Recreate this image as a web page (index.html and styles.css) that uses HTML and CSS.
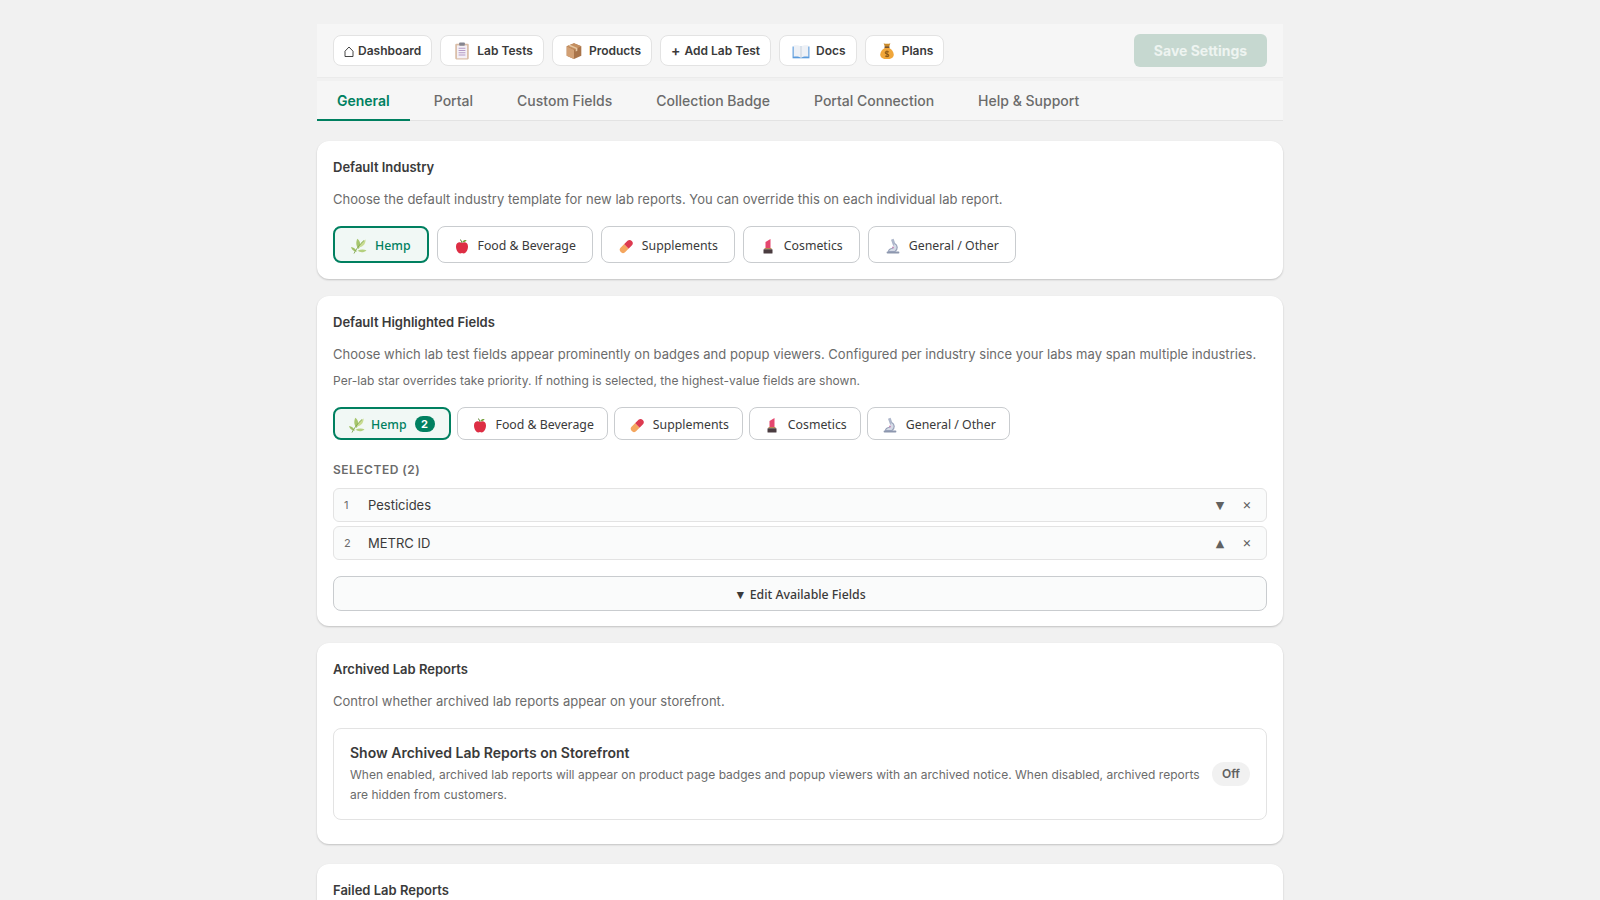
FILE: index.html
```html
<!DOCTYPE html>
<html lang="en">
<head>
    <meta charset="UTF-8">
    <meta name="viewport" content="width=device-width, initial-scale=1.0">
    <title>Settings</title>
    <link rel="stylesheet" href="styles.css">
</head>
<body>
    <!-- Icon sprite -->
    <svg class="sprite" width="0" height="0">
        <symbol id="i-clip" viewBox="0 0 16 16">
            <rect x="2" y="1.5" width="12" height="14" rx="1" fill="#d9bda6"/>
            <rect x="3.5" y="3" width="9" height="11.5" fill="#f4f0f6"/>
            <rect x="5.5" y="0.5" width="5" height="2.8" rx="0.6" fill="#85858f"/>
            <path d="M5 5.5h6M5 7.5h6M5 9.5h6M5 11.5h6" stroke="#b49ac6" stroke-width="0.9"/>
        </symbol>
        <symbol id="i-box" viewBox="0 0 16 16">
            <path d="M8 1 14.5 3.8v8.4L8 15 1.5 12.2V3.8z" fill="#a9744a"/>
            <path d="M8 6.8V15L1.5 12.2V3.8z" fill="#d2a074"/>
            <path d="M8 1 14.5 3.8 8 6.8 1.5 3.8z" fill="#c48f60"/>
            <path d="M4.5 2.5 11 5.4v2.3l-1.5 0.7V6.1L3 3.3z" fill="#e6c8a4"/>
        </symbol>
        <symbol id="i-book" viewBox="0 0 16 16">
            <path d="M0.5 4v10.5h15V4z" fill="#5b9bdc"/>
            <path d="M1.5 3c2.5-0.4 5 0 6.5 1 1.5-1 4-1.4 6.5-1v10c-2.5-0.4-5 0-6.5 1-1.5-1-4-1.4-6.5-1z" fill="#eef1f6"/>
            <path d="M8 4v10" stroke="#b7c2cf" stroke-width="0.6"/>
        </symbol>
        <symbol id="i-bag" viewBox="0 0 16 16">
            <path d="M5 1c1.2 0.7 4.8 0.7 6 0L9.8 4.5H6.2z" fill="#c98a2b"/>
            <path d="M6.2 5h3.6c2.5 1.6 4.2 3.8 4.2 6 0 2.9-2.5 4.2-6 4.2S2 13.9 2 11c0-2.2 1.7-4.4 4.2-6z" fill="#f0a63a"/>
            <rect x="5.8" y="4" width="4.4" height="1.3" fill="#6d4c2f"/>
            <path d="M8 7.5v6M9.6 9c-0.6-0.7-3.2-0.8-3.2 0.6 0 1.5 3.2 0.8 3.2 2.3 0 1.3-2.6 1.2-3.2 0.5" fill="none" stroke="#8a5716" stroke-width="0.9"/>
        </symbol>
        <symbol id="i-herb" viewBox="0 0 16 16">
            <path d="M7.5 11C4.8 8 4.8 4 6.3 0.8 9.8 3.5 10.3 8 7.5 11z" fill="#a6c66e"/>
            <path d="M6 13.5C4.500 10.800 2.500 9.200 0 9c0.900 3 3 4.800 6 4.500z" fill="#9fc066"/>
            <path d="M6.5 12.8c2.800-1.600 5.800-1.800 9-0.600-2.500 2.500-6 2.800-9 0.600z" fill="#b4d07e"/>
            <path d="M8 9.5c0.500-3.200 2.500-6 6.500-8 0.300 4-2 7-6.500 8z" fill="#c8dc92"/>
            <path d="M3 15.5C5 11.5 8 7 13 2.5" fill="none" stroke="#7fa650" stroke-width="0.9"/>
        </symbol>
        <symbol id="i-apple" viewBox="0 0 16 16">
            <path d="M8 5C6 3.6 2 4 2 8.5 2 12.5 4.5 15.5 6.2 15.5c0.8 0 1.2-0.4 1.8-0.4s1 0.4 1.8 0.4c1.7 0 4.2-3 4.2-7C14 4 10 3.6 8 5z" fill="#dd2e44"/>
            <path d="M8 5C7.8 3.5 7.2 2.3 6 1.5" fill="none" stroke="#5c7f32" stroke-width="1"/>
            <path d="M8.2 4C9 2.4 10.5 1.8 12.5 2 12 3.6 10.5 4.5 8.2 4z" fill="#77a33e"/>
        </symbol>
        <symbol id="i-pill" viewBox="0 0 16 16">
            <path d="M9.5 2.8a3.2 3.2 0 0 1 4.5 4.5L10.5 10.8 6 6.3z" fill="#dd3a50"/>
            <path d="M6 6.3l4.5 4.5L7 14.3a3.2 3.2 0 0 1-4.5-4.500z" fill="#f4a65e"/>
        </symbol>
        <symbol id="i-lip" viewBox="0 0 16 16">
            <path d="M5.5 10V4L10.5 1v9z" fill="#e5476f"/>
            <rect x="4.5" y="10" width="7" height="1.2" fill="#b98a50"/>
            <rect x="3.5" y="11.2" width="9" height="4.3" rx="0.5" fill="#4a3c40"/>
        </symbol>
        <symbol id="i-scope" viewBox="0 0 16 16">
            <path d="M2.5 14.5h11" stroke="#8d97ae" stroke-width="1.8" stroke-linecap="round"/>
            <path d="M6 1.8l2.6-1 2.2 6.2-2.6 1z" fill="#aeb7cb"/>
            <path d="M9.5 5.5c3.5 1.5 3.5 6 0.5 8H3.5c0-2 2-3 4.5-3.5" fill="#d5dae6" stroke="#98a2ba" stroke-width="1.2"/>
            <circle cx="8" cy="9.6" r="1" fill="#c48bb8"/>
        </symbol>
    </svg>

    <div class="page">
        <!-- Top navigation -->
        <div class="nav-bar">
            <div class="nav-links">
                <a class="nav-btn"><svg class="home-icon" viewBox="0 0 10 11"><path d="M1 10.5V5.2L5 1l4 4.2v5.3z" fill="none" stroke="#303030" stroke-width="0.9"/></svg>Dashboard</a>
                <a class="nav-btn wide"><svg class="icon"><use href="#i-clip"/></svg>Lab Tests</a>
                <a class="nav-btn wide"><svg class="icon"><use href="#i-box"/></svg>Products</a>
                <a class="nav-btn"><span class="plus-glyph">+</span>Add Lab Test</a>
                <a class="nav-btn wide"><svg class="icon"><use href="#i-book"/></svg>Docs</a>
                <a class="nav-btn wide"><svg class="icon"><use href="#i-bag"/></svg>Plans</a>
            </div>
            <button class="save-btn">Save Settings</button>
        </div>

        <!-- Tabs -->
        <div class="tabs">
            <a class="tab active">General</a>
            <a class="tab">Portal</a>
            <a class="tab">Custom Fields</a>
            <a class="tab">Collection Badge</a>
            <a class="tab">Portal Connection</a>
            <a class="tab">Help &amp; Support</a>
        </div>

        <!-- Default industry -->
        <section class="card">
            <h2 class="card-title">Default Industry</h2>
            <p class="card-desc">Choose the default industry template for new lab reports. You can override this on each individual lab report.</p>
            <div class="industry-row">
                <button class="industry-btn selected"><svg class="icon"><use href="#i-herb"/></svg>Hemp</button>
                <button class="industry-btn"><svg class="icon"><use href="#i-apple"/></svg>Food &amp; Beverage</button>
                <button class="industry-btn"><svg class="icon"><use href="#i-pill"/></svg>Supplements</button>
                <button class="industry-btn"><svg class="icon"><use href="#i-lip"/></svg>Cosmetics</button>
                <button class="industry-btn"><svg class="icon"><use href="#i-scope"/></svg>General / Other</button>
            </div>
        </section>

        <!-- Highlighted fields -->
        <section class="card fields-card">
            <h2 class="card-title">Default Highlighted Fields</h2>
            <p class="card-desc">Choose which lab test fields appear prominently on badges and popup viewers. Configured per industry since your labs may span multiple industries.</p>
            <p class="card-note">Per-lab star overrides take priority. If nothing is selected, the highest-value fields are shown.</p>
            <div class="industry-row small">
                <button class="industry-btn selected"><svg class="icon"><use href="#i-herb"/></svg>Hemp<span class="count">2</span></button>
                <button class="industry-btn"><svg class="icon"><use href="#i-apple"/></svg>Food &amp; Beverage</button>
                <button class="industry-btn"><svg class="icon"><use href="#i-pill"/></svg>Supplements</button>
                <button class="industry-btn"><svg class="icon"><use href="#i-lip"/></svg>Cosmetics</button>
                <button class="industry-btn"><svg class="icon"><use href="#i-scope"/></svg>General / Other</button>
            </div>
            <div class="selected-label">SELECTED (2)</div>
            <div class="field-row">
                <span class="field-num">1</span>
                <span class="field-name">Pesticides</span>
                <span class="field-move">▼</span>
                <span class="field-remove">×</span>
            </div>
            <div class="field-row">
                <span class="field-num">2</span>
                <span class="field-name">METRC ID</span>
                <span class="field-move">▲</span>
                <span class="field-remove">×</span>
            </div>
            <button class="edit-btn">▼ Edit Available Fields</button>
        </section>

        <!-- Archived -->
        <section class="card">
            <h2 class="card-title">Archived Lab Reports</h2>
            <p class="card-desc">Control whether archived lab reports appear on your storefront.</p>
            <div class="toggle-box">
                <div class="toggle-text">
                    <h3>Show Archived Lab Reports on Storefront</h3>
                    <p>When enabled, archived lab reports will appear on product page badges and popup viewers with an archived notice. When disabled, archived reports are hidden from customers.</p>
                </div>
                <span class="toggle-pill">Off</span>
            </div>
        </section>

        <!-- Failed -->
        <section class="card last">
            <h2 class="card-title">Failed Lab Reports</h2>
        </section>
    </div>
</body>
</html>
```

FILE: styles.css
```css
html, body {
    height: 100%;
    overflow: hidden;
}

body {
    margin: 0;
    background: #f1f1f1;
    color: #3a3a3a;
    font-family: Inter, "Liberation Sans", sans-serif;
}

.sprite {
    position: absolute;
}

.page {
    width: 966px;
    margin: 0 auto;
    padding-top: 24px;
}

.icon {
    width: 16px;
    height: 16px;
    flex: none;
}

/* Top navigation */
.nav-bar {
    display: flex;
    align-items: center;
    justify-content: space-between;
    height: 54px;
    padding: 0 16px;
    background: #f6f6f6;
    border-bottom: 1px solid #ebebeb;
    box-sizing: border-box;
}

.nav-links {
    display: flex;
    gap: 8px;
}

.nav-btn {
    display: flex;
    align-items: center;
    gap: 4px;
    height: 31px;
    padding: 0 10px;
    background: #fff;
    border: 1px solid #e3e3e3;
    border-radius: 8px;
    font-size: 12px;
    font-weight: 600;
    color: #3a3a3a;
    box-sizing: border-box;
}

.nav-btn.wide {
    gap: 6px;
    padding-left: 12px;
}

.nav-btn.wide .icon {
    width: 18px;
    height: 18px;
}

.home-icon {
    width: 10px;
    height: 11px;
    margin-top: 2px;
}

.plus-glyph {
    font-size: 14px;
}

.save-btn {
    width: 133px;
    height: 33px;
    border: none;
    border-radius: 6px;
    background: #c6d8d0;
    color: #eef4f1;
    font-family: inherit;
    font-size: 14px;
    font-weight: 700;
}

/* Tabs */
.tabs {
    display: flex;
    height: 40px;
    margin-top: 3px;
    background: #f6f6f6;
    border-bottom: 1px solid #e3e3e3;
    box-sizing: border-box;
}

.tab {
    display: flex;
    align-items: center;
    padding: 0 20px;
    margin-right: 4px;
    margin-bottom: -1px;
    font-size: 14px;
    font-weight: 500;
    color: #6b6b6b;
    border-bottom: 2px solid transparent;
}

.tab.active {
    color: #008060;
    font-weight: 600;
    border-bottom-color: #008060;
}

/* Cards */
.card {
    margin-top: 20px;
    margin-bottom: -3px;
    padding: 16px;
    background: #fff;
    border-radius: 12px;
    box-shadow: 0 1px 2px rgba(0, 0, 0, 0.2);
}

.card.fields-card {
    padding-bottom: 15px;
}

.card.last {
    margin-top: 23px;
}

.card-title {
    margin: 0;
    font-size: 13px;
    font-weight: 600;
    line-height: 20px;
    color: #3a3a3a;
}

.card-desc {
    margin: 12px 0 0;
    font-size: 13px;
    line-height: 20px;
    letter-spacing: 0.03px;
    color: #6b6b6b;
}

.card-note {
    margin: 7px 0 0;
    font-size: 12px;
    line-height: 20px;
    letter-spacing: 0.03px;
    color: #6b6b6b;
}

.industry-row {
    display: flex;
    gap: 8px;
    margin-top: 17px;
}

.industry-btn {
    display: flex;
    align-items: center;
    gap: 8px;
    height: 37px;
    padding: 2px 16px 0;
    background: #fff;
    border: 1px solid #c9cccf;
    border-radius: 8px;
    font-family: "Noto Sans", sans-serif;
    font-size: 12.3px;
    color: #3a3a3a;
    box-sizing: border-box;
}

.industry-btn.selected {
    background: #f1f8f5;
    border: 2px solid #008060;
    color: #008060;
    font-weight: 500;
}

.industry-row.small {
    gap: 6px;
    margin-top: 16px;
}

.industry-row.small .industry-btn {
    height: 33px;
    padding: 2px 13px 0 14px;
}

.industry-row.small .industry-btn.selected {
    gap: 6px;
    padding-right: 14px;
}

.count {
    display: flex;
    align-items: center;
    justify-content: center;
    width: 20px;
    height: 16px;
    margin-left: 2px;
    margin-top: -2px;
    background: #008060;
    border-radius: 8px;
    color: #fff;
    font-family: Inter, sans-serif;
    font-size: 11px;
    font-weight: 700;
}

.selected-label {
    margin-top: 22px;
    font-size: 12px;
    font-weight: 600;
    line-height: 16px;
    letter-spacing: 0.5px;
    color: #6b6b6b;
}

.field-row {
    display: flex;
    align-items: center;
    height: 34px;
    margin-top: 4px;
    padding: 0 10px;
    background: #fafbfb;
    border: 1px solid #e3e3e3;
    border-radius: 6px;
    box-sizing: border-box;
}

.selected-label + .field-row {
    margin-top: 10px;
}

.field-num {
    width: 24px;
    font-size: 11px;
    color: #6b6b6b;
}

.field-name {
    flex: 1;
    font-size: 13px;
    color: #3a3a3a;
}

.field-move {
    width: 16px;
    font-family: "DejaVu Sans", sans-serif;
    font-size: 11px;
    color: #616161;
    text-align: center;
}

.field-remove {
    width: 16px;
    margin-left: 11px;
    margin-right: 1px;
    margin-bottom: 3px;
    font-size: 14px;
    color: #616161;
    text-align: center;
}

.edit-btn {
    display: block;
    width: 100%;
    height: 35px;
    margin-top: 16px;
    padding-top: 2px;
    background: #fafbfb;
    border: 1px solid #c9cccf;
    border-radius: 8px;
    font-family: "Noto Sans", sans-serif;
    font-size: 12.3px;
    font-weight: 500;
    color: #3a3a3a;
}

/* Toggle row */
.toggle-box {
    display: flex;
    align-items: center;
    gap: 8px;
    margin-top: 17px;
    margin-bottom: 8px;
    padding: 14px 16px;
    border: 1px solid #e3e3e3;
    border-radius: 8px;
}

.toggle-text {
    flex: 1;
}

.toggle-text h3 {
    margin: 0 0 2px;
    font-size: 14px;
    font-weight: 600;
    line-height: 20px;
    color: #3a3a3a;
}

.toggle-text p {
    margin: 0;
    font-size: 12px;
    line-height: 20px;
    letter-spacing: 0.02px;
    color: #6b6b6b;
}

.toggle-pill {
    padding: 4px 10px;
    background: #f1f1f1;
    border-radius: 12px;
    font-size: 12px;
    font-weight: 600;
    line-height: 16px;
    color: #616161;
}
```
